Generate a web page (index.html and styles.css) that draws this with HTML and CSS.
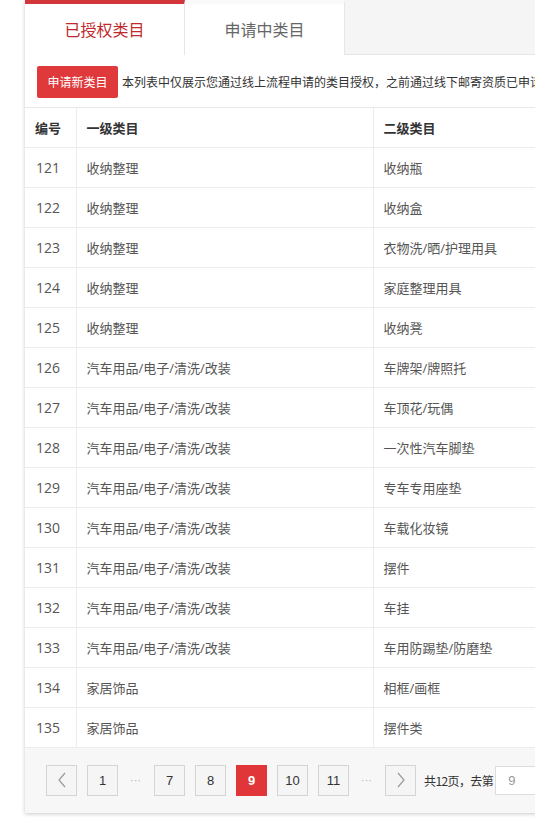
FILE: index.html
```html
<!DOCTYPE html>
<html lang="zh">
<head>
<meta charset="utf-8">
<link rel="stylesheet" href="styles.css">
</head>
<body>
<div class="panel">
  <div class="tabs">
    <div class="tab active">已授权类目</div>
    <div class="tab">申请中类目</div>
  </div>
  <div class="toolbar">
    <button class="btn-apply">申请新类目</button>
    <span class="notice">本列表中仅展示您通过线上流程申请的类目授权，之前通过线下邮寄资质已申请的类目授权请联系小二查询</span>
  </div>
  <table class="grid">
    <colgroup><col class="c-no"><col class="c-one"><col class="c-two"></colgroup>
    <thead>
      <tr><th>编号</th><th>一级类目</th><th>二级类目</th></tr>
    </thead>
    <tbody>
      <tr><td>121</td><td>收纳整理</td><td>收纳瓶</td></tr>
      <tr><td>122</td><td>收纳整理</td><td>收纳盒</td></tr>
      <tr><td>123</td><td>收纳整理</td><td>衣物洗/晒/护理用具</td></tr>
      <tr><td>124</td><td>收纳整理</td><td>家庭整理用具</td></tr>
      <tr><td>125</td><td>收纳整理</td><td>收纳凳</td></tr>
      <tr><td>126</td><td>汽车用品/电子/清洗/改装</td><td>车牌架/牌照托</td></tr>
      <tr><td>127</td><td>汽车用品/电子/清洗/改装</td><td>车顶花/玩偶</td></tr>
      <tr><td>128</td><td>汽车用品/电子/清洗/改装</td><td>一次性汽车脚垫</td></tr>
      <tr><td>129</td><td>汽车用品/电子/清洗/改装</td><td>专车专用座垫</td></tr>
      <tr><td>130</td><td>汽车用品/电子/清洗/改装</td><td>车载化妆镜</td></tr>
      <tr><td>131</td><td>汽车用品/电子/清洗/改装</td><td>摆件</td></tr>
      <tr><td>132</td><td>汽车用品/电子/清洗/改装</td><td>车挂</td></tr>
      <tr><td>133</td><td>汽车用品/电子/清洗/改装</td><td>车用防踢垫/防磨垫</td></tr>
      <tr><td>134</td><td>家居饰品</td><td>相框/画框</td></tr>
      <tr><td>135</td><td>家居饰品</td><td>摆件类</td></tr>
    </tbody>
  </table>
  <div class="pager">
    <a class="pg arrow"><svg width="10" height="16" viewBox="0 0 10 16"><path d="M8 1 L2 8 L8 15" fill="none" stroke="#999" stroke-width="1.2"/></svg></a>
    <a class="pg">1</a>
    <span class="dots">···</span>
    <a class="pg">7</a>
    <a class="pg">8</a>
    <a class="pg current">9</a>
    <a class="pg">10</a>
    <a class="pg">11</a>
    <span class="dots">···</span>
    <a class="pg arrow last"><svg width="10" height="16" viewBox="0 0 10 16"><path d="M2 1 L8 8 L2 15" fill="none" stroke="#999" stroke-width="1.2"/></svg></a>
    <span class="total">共12页，去第</span>
    <input class="goto" value="9">
  </div>
</div>
</body>
</html>
```

FILE: styles.css
```css
html, body {
  margin: 0;
  padding: 0;
  background: #fff;
  overflow: hidden;
}
body {
  font-family: "Noto Sans", "Noto Sans CJK SC", sans-serif;
  color: #333;
  width: 535px;
  height: 822px;
}
.panel {
  margin-left: 25px;
  width: 820px;
  background: #fff;
  box-shadow: 0 1px 4px rgba(0,0,0,0.22);
}
.tabs {
  display: flex;
  height: 55px;
  background: #f5f5f5;
  border-bottom: 1px solid #e6e6e6;
  box-sizing: border-box;
}
.tab {
  width: 160px;
  height: 55px;
  box-sizing: border-box;
  background: #fff;
  border-right: 1px solid #e6e6e6;
  border-top: 4px solid #fafafa;
  display: flex;
  align-items: center;
  justify-content: center;
  font-family: "Noto Sans CJK SC", sans-serif;
  font-size: 16px;
  color: #666;
  padding-bottom: 2px;
}
.tab.active {
  border-top-color: #d2363b;
  color: #c0292d;
}
.toolbar {
  display: flex;
  align-items: center;
  height: 53px;
  padding-left: 12px;
  border-bottom: 1px solid #e8e8e8;
  box-sizing: border-box;
  white-space: nowrap;
}
.btn-apply {
  width: 81px;
  height: 32px;
  border: none;
  border-radius: 2px;
  background: #e0393b;
  color: #fff;
  font-family: "Noto Sans CJK SC", sans-serif;
  font-size: 12px;
  padding: 0;
  margin-right: 4px;
  margin-top: 1px;
}
.notice {
  font-family: "Noto Sans CJK SC", sans-serif;
  font-size: 12px;
  color: #333;
}
.grid {
  border-collapse: collapse;
  width: 100%;
  table-layout: fixed;
  font-family: "Open Sans", "Noto Sans CJK SC", sans-serif;
  font-size: 13px;
}
.c-no { width: 51px; }
.c-one { width: 297px; }
.grid th, .grid td {
  height: 40px;
  padding: 0 0 0 10px;
  text-align: left;
  border-bottom: 1px solid #ececec;
  border-right: 1px solid #ececec;
  box-sizing: border-box;
  white-space: nowrap;
}
.grid th {
  font-weight: 600;
  color: #333;
  font-family: "Noto Sans CJK SC", sans-serif;
  height: 39px;
}
.grid td {
  color: #555;
}
.grid td:first-child {
  padding-left: 11px;
  font-size: 14px;
}
.pager {
  display: flex;
  align-items: center;
  height: 65px;
  background: #f7f7f7;
  padding-left: 21px;
  box-sizing: border-box;
}
.pg {
  width: 31px;
  height: 31px;
  box-sizing: border-box;
  border: 1px solid #d4d4d4;
  background: #f5f5f5;
  display: flex;
  align-items: center;
  justify-content: center;
  font-family: "Liberation Sans", sans-serif;
  font-size: 13px;
  color: #333;
  margin-right: 10px;
}
.pg.current {
  background: #e0363a;
  border-color: #e0363a;
  color: #fff;
  font-weight: bold;
}
.dots {
  width: 16px;
  margin-right: 10px;
  color: #bbb;
  font-size: 10px;
  text-align: center;
  letter-spacing: 1px;
}
.pg.last { margin-right: 8px; }
.total {
  font-family: "Noto Sans CJK SC", sans-serif;
  font-size: 12px;
  color: #333;
  letter-spacing: -0.6px;
  margin-right: 2px;
}
.goto {
  width: 60px;
  height: 29px;
  box-sizing: border-box;
  border: 1px solid #ddd;
  background: #fff;
  font-family: "Liberation Sans", sans-serif;
  font-size: 13px;
  color: #999;
  padding-left: 12px;
}
```
